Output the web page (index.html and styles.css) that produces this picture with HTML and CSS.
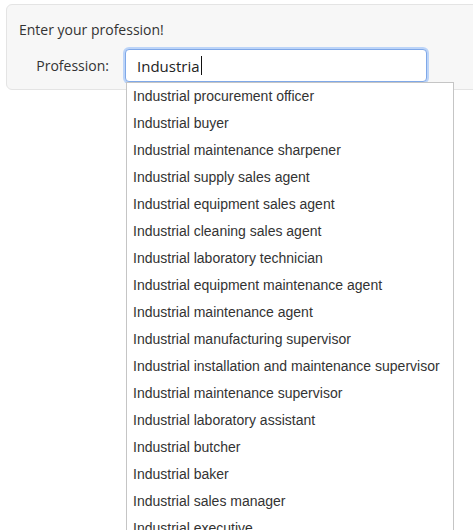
FILE: index.html
```html
<!DOCTYPE html>
<html>
<head>
<meta charset="utf-8">
<link rel="stylesheet" href="styles.css">
</head>
<body>
<div class="panel">
  <div class="title">Enter your profession!</div>
  <div class="row">
    <label class="label">Profession:</label>
    <div class="field">
      <div class="input"><span class="value">Industria</span><span class="caret"></span></div>
      <ul class="menu">
        <li>Industrial procurement officer</li>
        <li>Industrial buyer</li>
        <li>Industrial maintenance sharpener</li>
        <li>Industrial supply sales agent</li>
        <li>Industrial equipment sales agent</li>
        <li>Industrial cleaning sales agent</li>
        <li>Industrial laboratory technician</li>
        <li>Industrial equipment maintenance agent</li>
        <li>Industrial maintenance agent</li>
        <li>Industrial manufacturing supervisor</li>
        <li>Industrial installation and maintenance supervisor</li>
        <li>Industrial maintenance supervisor</li>
        <li>Industrial laboratory assistant</li>
        <li>Industrial butcher</li>
        <li>Industrial baker</li>
        <li>Industrial sales manager</li>
        <li>Industrial executive</li>
      </ul>
    </div>
  </div>
</div>
</body>
</html>
```
FILE: styles.css
```css
html, body {
  margin: 0;
  padding: 0;
  overflow: hidden;
  background: #ffffff;
  height: 530px;
}
body {
  padding: 4px 0 0 6px;
  font-family: "Open Sans", "Noto Sans", sans-serif;
  color: #333333;
}
.panel {
  width: 480px;
  height: 86px;
  box-sizing: border-box;
  background: #f7f7f7;
  border: 1px solid #e4e4e4;
  border-radius: 6px;
  padding: 15px 0 0 12px;
}
.title {
  font-size: 14px;
  line-height: 20px;
  color: #333333;
}
.row {
  display: flex;
  align-items: flex-start;
  margin-top: 9px;
}
.label {
  width: 90px;
  text-align: right;
  font-size: 14px;
  line-height: 20px;
  padding-top: 7px;
  color: #333333;
}
.field {
  position: relative;
  margin-left: 16px;
}
.input {
  width: 302px;
  height: 33px;
  box-sizing: border-box;
  background: #ffffff;
  border: 1px solid #7fa8e8;
  border-radius: 4px;
  box-shadow: 0 0 0 2px #bcd4f8;
  padding: 0 0 0 11px;
  display: flex;
  align-items: center;
  font-size: 15px;
  color: #222222;
}
.caret {
  display: inline-block;
  width: 1px;
  height: 19px;
  background: #111111;
  margin-left: 1px;
}
.menu {
  position: absolute;
  left: 1px;
  top: 33px;
  width: 328px;
  box-sizing: border-box;
  margin: 0;
  padding: 0;
  list-style: none;
  background: #ffffff;
  border: 1px solid #c5c5c5;
  font-family: "Liberation Sans", Arial, sans-serif;
  font-size: 14px;
  color: #333333;
}
.menu li {
  height: 27px;
  line-height: 27px;
  padding-left: 6px;
  white-space: nowrap;
}
```
